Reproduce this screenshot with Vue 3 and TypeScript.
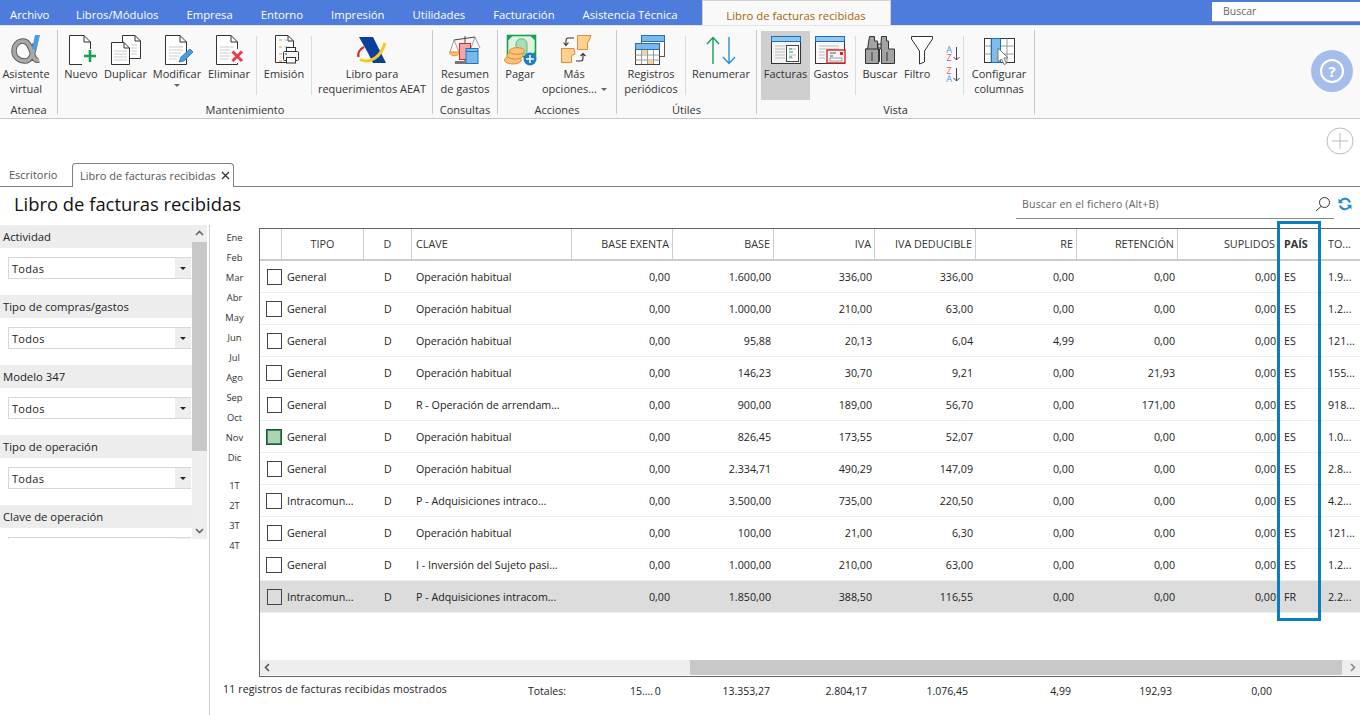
<script setup lang="ts">
interface Row {
  tipo: string
  clave: string
  nums: string[]
  pais: string
  total: string
  mark?: boolean
  sel?: boolean
}

const navItems: string[] = ['Libros/Módulos', 'Empresa', 'Entorno', 'Impresión', 'Utilidades', 'Facturación', 'Asistencia Técnica']
const filters: { title: string; value: string }[] = [
  { title: 'Actividad', value: 'Todas' },
  { title: 'Tipo de compras/gastos', value: 'Todos' },
  { title: 'Modelo 347', value: 'Todos' },
  { title: 'Tipo de operación', value: 'Todas' },
  { title: 'Clave de operación', value: '' }
]
const months: string[] = ['Ene', 'Feb', 'Mar', 'Abr', 'May', 'Jun', 'Jul', 'Ago', 'Sep', 'Oct', 'Nov', 'Dic']
const quarters: string[] = ['1T', '2T', '3T', '4T']
const numHeads: string[] = ['BASE EXENTA', 'BASE', 'IVA', 'IVA DEDUCIBLE', 'RE', 'RETENCIÓN', 'SUPLIDOS']
const OH = 'Operación habitual'
const rows: Row[] = [
  { tipo: 'General', clave: OH, nums: ['0,00', '1.600,00', '336,00', '336,00', '0,00', '0,00', '0,00'], pais: 'ES', total: '1.9...' },
  { tipo: 'General', clave: OH, nums: ['0,00', '1.000,00', '210,00', '63,00', '0,00', '0,00', '0,00'], pais: 'ES', total: '1.2...' },
  { tipo: 'General', clave: OH, nums: ['0,00', '95,88', '20,13', '6,04', '4,99', '0,00', '0,00'], pais: 'ES', total: '121...' },
  { tipo: 'General', clave: OH, nums: ['0,00', '146,23', '30,70', '9,21', '0,00', '21,93', '0,00'], pais: 'ES', total: '155...' },
  { tipo: 'General', clave: 'R - Operación de arrendam...', nums: ['0,00', '900,00', '189,00', '56,70', '0,00', '171,00', '0,00'], pais: 'ES', total: '918...' },
  { tipo: 'General', clave: OH, nums: ['0,00', '826,45', '173,55', '52,07', '0,00', '0,00', '0,00'], pais: 'ES', total: '1.0...', mark: true },
  { tipo: 'General', clave: OH, nums: ['0,00', '2.334,71', '490,29', '147,09', '0,00', '0,00', '0,00'], pais: 'ES', total: '2.8...' },
  { tipo: 'Intracomun...', clave: 'P - Adquisiciones intraco...', nums: ['0,00', '3.500,00', '735,00', '220,50', '0,00', '0,00', '0,00'], pais: 'ES', total: '4.2...' },
  { tipo: 'General', clave: OH, nums: ['0,00', '100,00', '21,00', '6,30', '0,00', '0,00', '0,00'], pais: 'ES', total: '121...' },
  { tipo: 'General', clave: 'I - Inversión del Sujeto pasi...', nums: ['0,00', '1.000,00', '210,00', '63,00', '0,00', '0,00', '0,00'], pais: 'ES', total: '1.2...' },
  { tipo: 'Intracomun...', clave: 'P - Adquisiciones intracom...', nums: ['0,00', '1.850,00', '388,50', '116,55', '0,00', '0,00', '0,00'], pais: 'FR', total: '2.2...', sel: true }
]
const totals: string[] = ['13.353,27', '2.804,17', '1.076,45', '4,99', '192,93', '0,00']
</script>

<template>
  <div class="page">
    <header class="topbar">
      <span class="archivo">Archivo</span>
      <span v-for="n in navItems" :key="n" class="nav">{{ n }}</span>
      <span class="ctx">Libro de facturas recibidas</span>
      <span class="topsearch">Buscar</span>
    </header>

    <section class="ribbon">
      <div class="group g-atenea">
        <div class="btns">
          <div class="btn w52">
            <svg class="ic" viewBox="0 0 36 32">
              <path d="M27 10C25 18 24 27 17 27C10 27 6 22 6 17C6 11 10 7 15 7C21 7 23 15 25 21C26 25 28 27 31 26" fill="none" stroke="#5f5f5f" stroke-width="5.5" />
              <path d="M27 10C25 18 24 27 17 27C10 27 6 22 6 17C6 11 10 7 15 7C21 7 23 15 25 21C26 25 28 27 31 26" fill="none" stroke="#a9a9a9" stroke-width="3.5" />
              <path d="M27 1H32L28 17L24 15Z" fill="#4a9fdf" />
            </svg>
            <span>Asistente<br />virtual</span>
          </div>
        </div>
        <div class="glabel">Atenea</div>
      </div>

      <div class="group g-mant">
        <div class="btns">
          <div class="btn w46">
            <svg class="ic" viewBox="0 0 36 32">
              <path d="M6.5 1.5H21L27.5 8V30.5H6.5Z" fill="#fff" stroke="#333" />
              <path d="M21 1.5V8H27.5" fill="none" stroke="#333" />
              <rect x="19" y="15" width="16" height="16" fill="#f9f9f9" />
              <path d="M21 22H33M27 16V28" stroke="#12a150" stroke-width="2.6" />
            </svg>
            <span>Nuevo</span>
          </div>
          <div class="btn w42">
            <svg class="ic" viewBox="0 0 36 32">
              <path d="M15.5 1.5H28L33.5 7V24.5H15.5Z" fill="#fff" stroke="#333" />
              <path d="M28 1.5V7H33.5" fill="none" stroke="#333" />
              <path d="M24 11H30M24 14H30M24 17H30M24 20H30" stroke="#ccc" />
              <path d="M4.5 8.5H17L22.5 14V30.5H4.5Z" fill="#fff" stroke="#333" />
              <path d="M17 8.5V14H22.5" fill="none" stroke="#333" />
              <path d="M7 17H20M7 20H20M7 23H20M7 26H20" stroke="#ccc" />
            </svg>
            <span>Duplicar</span>
          </div>
          <div class="btn w62">
            <svg class="ic" viewBox="0 0 36 32">
              <path d="M6.5 1.5H21L27.5 8V30.5H6.5Z" fill="#fff" stroke="#333" />
              <path d="M21 1.5V8H27.5" fill="none" stroke="#333" />
              <path d="M10 13H24M10 16H24M10 19H22M10 22H20M10 25H18" stroke="#ccc" />
              <path d="M20 28L22 23L31 15L34 18L25 27Z" fill="#4a9bdc" stroke="#1f74b8" stroke-width=".8" />
            </svg>
            <span>Modificar</span>
            <i class="caret cm"></i>
          </div>
          <div class="btn w42">
            <svg class="ic" viewBox="0 0 36 32">
              <path d="M5.5 1.5H20L26.5 8V30.5H5.5Z" fill="#fff" stroke="#333" />
              <path d="M20 1.5V8H26.5" fill="none" stroke="#333" />
              <path d="M9 13H23M9 16H23M9 19H20M9 22H19M9 25H18" stroke="#ccc" />
              <rect x="19" y="15" width="14" height="14" fill="#f9f9f9" />
              <path d="M21.5 17.5L31 27M31 17.5L21.5 27" stroke="#e53e49" stroke-width="3" />
            </svg>
            <span>Eliminar</span>
          </div>
          <i class="sep s6"></i>
          <div class="btn w54">
            <svg class="ic" viewBox="0 0 36 32">
              <path d="M9.5 1.5H22L27.5 7V28.5H9.5Z" fill="#fff" stroke="#333" />
              <path d="M22 1.5V7H27.5" fill="none" stroke="#333" />
              <path d="M13 6H16M13 13H16M13 20H16M13 27H16" stroke="#f0922b" />
              <path d="M18 6H21M18 13H24M18 20H19" stroke="#bbb" />
              <path d="M21 7.5" />
              <rect x="17.5" y="17.5" width="15" height="9" rx="1" fill="#f4f4f4" stroke="#333" />
              <rect x="20.5" y="13.5" width="9" height="4" fill="#fff" stroke="#333" />
              <rect x="20.5" y="23.5" width="9" height="5.5" fill="#fff" stroke="#333" />
              <path d="M19 20H21" stroke="#2f8fd6" stroke-width="1.4" />
            </svg>
            <span>Emisión</span>
          </div>
          <i class="sep"></i>
          <div class="btn w120">
            <svg class="ic" viewBox="0 0 36 32">
              <path d="M5 3H19L32 29H19L14 19Z" fill="#0a3f9c" />
              <path d="M6 25.5C16 30 27 23 31 9" fill="none" stroke="#f3cb1f" stroke-width="3" />
              <path d="M4.5 23C3.5 19 6 15 10 13" fill="none" stroke="#d92b2b" stroke-width="2.4" />
            </svg>
            <span>Libro para<br />requerimientos AEAT</span>
          </div>
        </div>
        <div class="glabel">Mantenimiento</div>
      </div>

      <div class="group g-cons">
        <div class="btns">
          <div class="btn w64">
            <svg class="ic" viewBox="0 0 36 32">
              <path d="M18 2V27M7 6L28 3" stroke="#444" fill="none" />
              <path d="M7 6L3 18M7 6L12 18M28 3L24 14M28 3L33 14" stroke="#777" stroke-width=".7" fill="none" />
              <path d="M2.5 18H12.5C12 23 3 23 2.5 18Z" fill="#f7c27b" stroke="#ea8a2e" />
              <rect x="12.5" y="9.5" width="11" height="16" fill="#f6a6a6" stroke="#d8232a" />
              <rect x="19" y="14.5" width="12" height="15" fill="#7ab8ea" stroke="#1f74b8" />
              <path d="M19 17.5H31" stroke="#1f74b8" />
              <rect x="8" y="27" width="11" height="3" fill="#777" />
            </svg>
            <span>Resumen<br />de gastos</span>
          </div>
        </div>
        <div class="glabel">Consultas</div>
      </div>

      <div class="group g-acc">
        <div class="btns">
          <div class="btn w44">
            <svg class="ic" viewBox="0 0 36 32">
              <rect x="5.5" y="1.5" width="28" height="21" fill="#dff3e4" stroke="#16a34a" stroke-width="1.6" />
              <path d="M5.5 1.5H11L5.5 7ZM33.5 1.5H28L33.5 7ZM33.5 22.5H28L33.5 17Z" fill="#16a34a" />
              <path d="M14 20V10C14 3 25 3 25 10V20Z" fill="#a9dcb7" stroke="#5fb77a" />
              <ellipse cx="11" cy="26" rx="8.5" ry="4" fill="#f7c27b" stroke="#ea8a2e" />
              <ellipse cx="13" cy="21.5" rx="8" ry="3.6" fill="#f7c27b" stroke="#ea8a2e" />
              <ellipse cx="15" cy="17" rx="7.5" ry="3.4" fill="#f7c27b" stroke="#ea8a2e" />
              <circle cx="28" cy="25" r="6.5" fill="#1f7fc4" />
              <path d="M24 25H32M28 21V29" stroke="#fff" stroke-width="1.5" />
            </svg>
            <span>Pagar</span>
          </div>
          <div class="btn w64">
            <svg class="ic" viewBox="0 0 36 32">
              <path d="M5.5 14.5H18L19 20L15.5 21.5V28.5H5.5Z" fill="#fbd28f" stroke="#ea8a2e" />
              <path d="M21.5 1.5H35L33 7L31.5 9V15.5H21.5Z" fill="#fbd28f" stroke="#ea8a2e" />
              <path d="M18 4H12C10.5 4 10 5 10 7V11M7.5 8.5L10 11.5L12.5 8.5" fill="none" stroke="#333" stroke-width="1.1" />
              <path d="M20 27H25C26.5 27 27 26 27 24V20M24.5 22L27 19.5L29.5 22" fill="none" stroke="#333" stroke-width="1.1" />
            </svg>
            <span>Más<br />opciones...<i class="caret cinl"></i></span>
          </div>
        </div>
        <div class="glabel">Acciones</div>
      </div>

      <div class="group g-util">
        <div class="btns">
          <div class="btn w68">
            <svg class="ic" viewBox="0 0 36 32">
              <rect x="8.5" y="1.5" width="23" height="21" fill="#fff" stroke="#555" />
              <rect x="8.5" y="1.5" width="23" height="6" fill="#7ab8ea" stroke="#1f74b8" />
              <rect x="2.5" y="9.5" width="24" height="21" fill="#fff" stroke="#444" />
              <path d="M2.5 21H26.5M2.5 26H26.5M8.5 15V30M14.5 15V30M20.5 15V30" stroke="#999" />
              <rect x="2.5" y="9.5" width="24" height="6" fill="#7ab8ea" stroke="#1f74b8" />
              <rect x="9" y="16" width="5" height="5" fill="#f9d38f" />
              <rect x="15" y="26" width="5" height="4" fill="#f9d38f" />
            </svg>
            <span>Registros<br />periódicos</span>
          </div>
          <i class="sep"></i>
          <div class="btn w70">
            <svg class="ic" viewBox="0 0 36 32">
              <path d="M10 30V4M4 10L10 3.5L16 10" fill="none" stroke="#14a05a" stroke-width="1.4" />
              <path d="M26 3V29M20 23L26 29.5L32 23" fill="none" stroke="#2f8fd6" stroke-width="1.4" />
            </svg>
            <span>Renumerar</span>
          </div>
        </div>
        <div class="glabel">Útiles</div>
      </div>

      <div class="group g-vista">
        <div class="btns">
          <div class="btn w49 active">
            <svg class="ic" viewBox="0 0 36 32">
              <rect x="3.5" y="2.5" width="29" height="27" fill="#f4f4f4" stroke="#333" />
              <rect x="3.5" y="2.5" width="29" height="5" fill="#95c7ee" stroke="#1672b8" />
              <path d="M7 12H17M7 15H17M7 18H17M7 21H17M7 24H17" stroke="#bbb" />
              <rect x="18.5" y="11.5" width="12" height="16" fill="#fff" stroke="#444" />
              <path d="M21 15H28M21 21H28M21 24H25" stroke="#bbb" />
              <path d="M21 18H25" stroke="#14a05a" />
              <path d="M21 15H24M21 23H24" stroke="#14a05a" />
            </svg>
            <span>Facturas</span>
          </div>
          <div class="btn w42">
            <svg class="ic" viewBox="0 0 36 32">
              <rect x="2.5" y="2.5" width="29" height="27" fill="#f9f9f9" stroke="#333" />
              <rect x="2.5" y="2.5" width="29" height="5" fill="#95c7ee" stroke="#1672b8" />
              <path d="M6 12H26M6 15H26M6 18H12M6 21H12M6 24H12" stroke="#bbb" />
              <rect x="14" y="16" width="18" height="13" fill="#f7f7f7" stroke="#d8232a" stroke-width="1.4" />
              <path d="M17 19H23M17 22H20" stroke="#555" />
              <rect x="27" y="18" width="3" height="3" fill="#d8232a" />
              <rect x="17" y="24" width="12" height="3" fill="#fff" stroke="#777" stroke-width=".7" />
            </svg>
            <span>Gastos</span>
          </div>
          <i class="sep s3"></i>
          <div class="btn w48">
            <svg class="ic" viewBox="0 0 36 32">
              <path d="M6.5 2.5H11.5V7H14.5V15H16.5V27.5H2.5V15H4.5Z" fill="#a3a3a3" stroke="#333" transform="translate(1)" />
              <path d="M19.5 2.5H24.5V7H26.5V15H32.5V29.5H19.5V15H18.5Z" fill="#a3a3a3" stroke="#333" />
              <path d="M3.5 15H16.5V29.5H3.5Z" fill="#a3a3a3" stroke="#333" />
              <path d="M16 10H19V14H16Z" fill="#ddd" stroke="#333" />
              <path d="M10 18V27M25 18V27" stroke="#333" />
            </svg>
            <span>Buscar</span>
          </div>
          <div class="btn w26">
            <svg class="ic" viewBox="0 0 36 32">
              <path d="M7.5 2.5H28.5V5L20.5 17V28L15.5 30V17L7.5 5Z" fill="#fff" stroke="#333" />
            </svg>
            <span>Filtro</span>
          </div>
          <div class="az">
            <div class="azi"><span class="l"><b class="bl">A</b><b class="rd">Z</b></span><svg viewBox="0 0 7 14" class="ar"><path d="M3.5 0V13M.5 10L3.5 13L6.5 10" fill="none" stroke="#444" /></svg></div>
            <div class="azi"><span class="l"><b class="rd">Z</b><b class="bl">A</b></span><svg viewBox="0 0 7 14" class="ar"><path d="M3.5 0V13M.5 10L3.5 13L6.5 10" fill="none" stroke="#444" /></svg></div>
          </div>
          <i class="sep"></i>
          <div class="btn w70">
            <svg class="ic" viewBox="0 0 36 32">
              <rect x="3.5" y="4.5" width="30" height="24" fill="#fff" stroke="#333" />
              <path d="M3.5 12H33.5M3.5 20H33.5M10 4.5V28.5M19 4.5V28.5M26 4.5V28.5" stroke="#999" />
              <rect x="10.5" y="4.5" width="9" height="24" fill="#7fbcea" stroke="#1672b8" />
              <path d="M17 14V28L20.5 25L23 30.5L25.5 29.5L23 24L27 24Z" fill="#fff" stroke="#777" />
            </svg>
            <span>Configurar<br />columnas</span>
          </div>
        </div>
        <div class="glabel">Vista</div>
      </div>

      <div class="help" aria-label="Ayuda"><span>?</span></div>
    </section>

    <div class="addrow">
      <svg class="add" viewBox="0 0 28 28">
        <circle cx="14" cy="14" r="13" fill="#fff" stroke="#bcbcbc" />
        <path d="M14 6V22M6 14H22" stroke="#bcbcbc" />
      </svg>
    </div>

    <nav class="tabs">
      <span class="t-plain">Escritorio</span>
      <span class="t-active">Libro de facturas recibidas
        <svg class="x" viewBox="0 0 9 9"><path d="M1 1L8 8M8 1L1 8" stroke="#333" stroke-width="1.3" /></svg>
      </span>
    </nav>

    <div class="titlebar">
      <h1>Libro de facturas recibidas</h1>
      <div class="filesearch">
        <span>Buscar en el fichero (Alt+B)</span>
        <svg class="lens" viewBox="0 0 16 16"><circle cx="9.5" cy="6.5" r="5" fill="none" stroke="#333" /><path d="M6 10.5L1 15" stroke="#333" /></svg>
      </div>
      <svg class="refresh" viewBox="0 0 14 14">
        <path d="M12 5.5A5.2 5.2 0 0 0 2.6 4.2" fill="none" stroke="#1f8ad0" stroke-width="2" />
        <path d="M2 8.5A5.2 5.2 0 0 0 11.4 9.8" fill="none" stroke="#1f8ad0" stroke-width="2" />
        <path d="M.5 1.5V6.2H5.2ZM13.5 12.5V7.8H8.8Z" fill="#1f8ad0" />
      </svg>
    </div>

    <main class="main">
      <aside class="filters">
        <div class="fl-list">
          <div v-for="f in filters" :key="f.title" class="fl">
            <div class="fl-head">{{ f.title }}</div>
            <div class="fl-sel">
              <span>{{ f.value }}</span>
              <i class="fl-arrow"></i>
            </div>
          </div>
        </div>
        <div class="vscroll">
          <svg class="chev" viewBox="0 0 9 6"><path d="M1 5L4.5 1.5L8 5" fill="none" stroke="#666" stroke-width="1.6" /></svg>
          <div class="vthumb"></div>
          <svg class="chev chev-d" viewBox="0 0 9 6"><path d="M1 1L4.5 4.5L8 1" fill="none" stroke="#666" stroke-width="1.6" /></svg>
        </div>
      </aside>

      <div class="months">
        <span v-for="m in months" :key="m">{{ m }}</span>
        <span v-for="q in quarters" :key="q" class="q" :class="{ first: q === '1T' }">{{ q }}</span>
      </div>

      <div class="content">
        <div class="grid">
          <div class="head cols">
            <div></div>
            <div class="c">TIPO</div>
            <div class="c">D</div>
            <div class="l">CLAVE</div>
            <div v-for="h in numHeads" :key="h" class="r">{{ h }}</div>
            <div class="l pais"><b>PAÍS</b></div>
            <div class="l tot">TO...</div>
          </div>
          <div class="body">
            <div v-for="(r, i) in rows" :key="i" class="row cols" :class="{ sel: r.sel }">
              <div class="chk" :class="{ odd: i % 2 === 1 }"><i class="box" :class="{ mark: r.mark }"></i></div>
              <div class="l tipo">{{ r.tipo }}</div>
              <div class="c">D</div>
              <div class="l">{{ r.clave }}</div>
              <div v-for="(n, j) in r.nums" :key="j" class="r">{{ n }}</div>
              <div class="l pais">{{ r.pais }}</div>
              <div class="l tot">{{ r.total }}</div>
            </div>
          </div>
          <div class="hscroll">
            <svg class="hchev" viewBox="0 0 6 9"><path d="M5 1L1.5 4.5L5 8" fill="none" stroke="#555" stroke-width="1.6" /></svg>
            <div class="hthumb"></div>
            <svg class="hchev" viewBox="0 0 6 9"><path d="M1 1L4.5 4.5L1 8" fill="none" stroke="#888" stroke-width="1.6" /></svg>
          </div>
        </div>
        <footer class="foot">
          <span class="count">11 registros de facturas recibidas mostrados</span>
          <span class="tl">Totales:</span>
          <span class="t0">15.... <i>0</i></span>
          <span v-for="t in totals" :key="t" class="tv">{{ t }}</span>
        </footer>
      </div>
    </main>

    <div class="hl"></div>
  </div>
</template>

<style>
html, body { margin: 0; overflow: hidden; background: #fff; }
</style>

<style scoped>
.page { position: relative; width: 1360px; height: 715px; overflow: hidden; background: #fff; color: #222; font-family: "Open Sans", "Noto Sans", sans-serif; font-size: 11px; }

.topbar { display: flex; height: 25px; background: #4e7cdc; color: #fff; align-items: center; font-size: 11.3px; }
.archivo { width: 62px; padding-left: 10px; box-sizing: border-box; padding-top: 3px; }
.nav { padding: 3px 14px 0; white-space: nowrap; margin-right: 0; }
.nav:first-of-type { margin-left: 1px; }
.ctx { width: 189px; box-sizing: border-box; height: 25px; margin-left: 10px; padding-top: 7px; background: #f9f9f9; border: 1px solid #d4d0c8; border-bottom: 0; color: #a5640a; text-align: center; }
.topsearch { margin-left: auto; width: 148px; height: 20px; margin-top: -2px; box-sizing: border-box; padding: 2px 11px; background: #fff; border-bottom: 1px solid #999; color: #666; font-size: 10.5px; }

.ribbon { position: relative; display: flex; height: 94px; box-sizing: border-box; padding-top: 4px; background: #f9f9f9; border-top: 1px solid #e4e4e4; border-bottom: 1px solid #c8c8c8; }
.group { box-sizing: border-box; height: 84px; border-right: 1px solid #c8c8c8; flex: none; }
.g-atenea { width: 58px; }
.g-mant { width: 375px; }
.g-cons { width: 65px; }
.g-acc { width: 119px; }
.g-util { width: 140px; }
.g-vista { width: 278px; padding-left: 4px; }
.btns { display: flex; height: 69px; margin-top: 1px; }
.btn { flex: none; position: relative; box-sizing: border-box; padding-top: 3px; text-align: center; white-space: nowrap; line-height: 15px; color: #333; letter-spacing: 0; }
.btn.active { background: #cfcfcf; }
.ic { display: block; width: 36px; height: 32px; margin: 0 auto; }
.w26 { width: 26px; } .w42 { width: 42px; } .w44 { width: 44px; } .w46 { width: 46px; } .w48 { width: 48px; } .w49 { width: 49px; } .w52 { width: 52px; } .w54 { width: 54px; } .w62 { width: 62px; } .w64 { width: 64px; } .w68 { width: 68px; } .w70 { width: 70px; } .w120 { width: 120px; }
.sep { flex: none; width: 1px; height: 59px; margin-top: 5px; background: #dcdcdc; }
.s6 { margin-left: 6px; }
.s3 { margin-left: 3px; }
.glabel { margin-left: 0; text-align: center; line-height: 20px; color: #333; }
.g-vista .glabel { margin-left: -4px; }
.caret { display: inline-block; width: 0; height: 0; border: 3px solid transparent; border-top: 3px solid #666; border-bottom: 0; }
.cm { position: absolute; left: 28px; top: 53px; }
.cinl { margin-left: 4px; vertical-align: 2px; }
.az { flex: none; width: 33px; display: flex; flex-direction: column; gap: 5px; padding: 15px 0 0 11px; box-sizing: border-box; }
.azi { display: flex; height: 16px; }
.l { display: block; }
.az .l { display: flex; flex-direction: column; width: 8px; font-size: 9px; line-height: 8px; text-align: center; }
.az b { font-weight: 400; }
.bl { color: #4a9fdf; }
.rd { color: #e5555d; }
.ar { width: 7px; height: 14px; margin-left: 0; margin-top: 1px; }
.help { position: absolute; left: 1311px; top: 24px; width: 42px; height: 42px; border-radius: 50%; background: #a6bdec; display: flex; align-items: center; justify-content: center; }
.help span { width: 20px; height: 20px; border: 2.5px solid #fff; border-radius: 50%; color: #fff; font-weight: 700; font-size: 15px; line-height: 20px; text-align: center; }

.addrow { display: flex; justify-content: flex-end; height: 44px; padding: 8px 6px 0 0; box-sizing: border-box; }
.add { width: 28px; height: 28px; }

.tabs { display: flex; height: 24px; box-sizing: border-box; border-bottom: 1px solid #808080; color: #555; }
.t-plain { width: 72px; padding: 4px 0 0 9px; box-sizing: border-box; }
.t-active { width: 162px; height: 24px; box-sizing: border-box; display: flex; align-items: center; gap: 5px; padding: 0 0 1px 7px; background: #fff; border: 1px solid #808080; border-bottom: 0; border-radius: 4px 4px 0 0; white-space: nowrap; }
.x { width: 9px; height: 9px; }

.titlebar { display: flex; height: 38px; }
h1 { margin: 0; padding: 4px 0 0 14px; font-weight: 400; font-size: 18.4px; line-height: 26px; color: #111; flex: 1; }
.filesearch { position: relative; width: 318px; height: 25px; margin-top: 7px; box-sizing: border-box; border-bottom: 1px solid #888; padding: 2px 0 0 6px; color: #666; line-height: 16px; font-size: 10.6px; letter-spacing: .15px; }
.lens { position: absolute; right: 3px; top: 2px; width: 16px; height: 16px; }
.refresh { width: 14px; height: 14px; margin: 10px 8px 0 4px; }

.main { display: flex; height: 490px; }
.filters { flex: none; width: 207px; height: 314px; display: flex; }
.fl-list { width: 192px; height: 314px; overflow: hidden; }
.fl { height: 70px; }
.fl-head { height: 23px; line-height: 23px; padding-left: 3px; background: #ededed; font-size: 11.3px; }
.fl-sel { display: flex; justify-content: space-between; align-items: center; height: 20px; margin: 9px 1px 0 8px; box-sizing: content-box; border: 1px solid #d8d8d8; border-right: 0; padding-left: 3px; letter-spacing: .3px; }
.fl-arrow { display: flex; align-items: center; justify-content: center; width: 16px; height: 20px; background: #eee; position: relative; }
.fl-arrow::after { content: ""; width: 0; height: 0; border: 3px solid transparent; border-top: 3px solid #222; border-bottom: 0; }
.vscroll { width: 15px; height: 314px; background: #eee; display: flex; flex-direction: column; align-items: center; }
.chev { width: 9px; height: 6px; margin: 5px 0 6px; flex: none; }
.chev-d { margin: auto 0 5px; }
.vthumb { width: 15px; height: 209px; background: #c8c8c8; flex: none; }
.months { flex: none; width: 50px; margin-left: 2px; border-left: 1px solid #ccc; box-sizing: border-box; display: flex; flex-direction: column; align-items: center; padding: 3px 0 0 0; color: #333; font-size: 9.4px; line-height: 20px; }
.months span { height: 20px; }
.q.first { margin-top: 8px; }
.content { flex: none; width: 1101px; padding-top: 3px; box-sizing: border-box; }
.grid { height: 449px; box-sizing: border-box; border: 1px solid #666; border-right: 0; display: flex; flex-direction: column; }
.cols { display: grid; grid-template-columns: 22px 82px 48px 160px repeat(7, 101px) 41px 35px 1fr; align-items: center; }
.head { height: 32px; flex: none; box-sizing: border-box; border-bottom: 2px solid #ccc; color: #333; font-size: 10.8px; }
.head > div { height: 30px; line-height: 30px; box-sizing: border-box; border-right: 1px solid #ccc; }
.head > .tot { border-right: 0; }
.c { text-align: center; }
.r { text-align: right; padding-right: 3px; }
.l { text-align: left; padding-left: 4px; white-space: nowrap; overflow: hidden; }
.head .pais { padding-left: 5px; }
.tot { padding-left: 8px; }
.body { flex: 1; overflow: hidden; }
.row { height: 32px; box-sizing: border-box; border-bottom: 1px solid #eee; font-size: 10.7px; }
.row.sel { background: #dcdcdc; }
.row .pais { padding-left: 5px; }
.row .tipo { padding-left: 5px; }
.chk { padding-left: 7px; height: 16px; display: flex; }
.chk.odd { padding-left: 6px; }
.box { display: block; width: 16px; height: 16px; box-sizing: border-box; border: 1px solid #444; background: transparent; }
.box.mark { background: #a9d5b5; outline: 1px solid #1a9a55; outline-offset: -2px; }
.hscroll { flex: none; display: flex; align-items: center; justify-content: space-between; height: 15px; margin-bottom: 1px; background: #eee; position: relative; }
.hchev { width: 6px; height: 9px; margin: 0 4px; }
.hthumb { position: absolute; left: 430px; right: 18px; top: 0; bottom: 0; background: #c8c8c8; }
.foot { position: relative; height: 38px; font-size: 10.5px; }
.foot span { position: absolute; top: 7px; white-space: nowrap; }
.count { left: -36px; letter-spacing: .15px; top: 5px !important; }
.tl { left: 269px; }
.t0 { left: 371px; }
.t0 i { font-style: normal; margin-left: -1px; }
.tv { transform: translateX(-100%); }
.tv:nth-of-type(4) { left: 511px; }
.tv:nth-of-type(5) { left: 608px; }
.tv:nth-of-type(6) { left: 709px; }
.tv:nth-of-type(7) { left: 812px; }
.tv:nth-of-type(8) { left: 913px; }
.tv:nth-of-type(9) { left: 1013px; }
.hl { position: absolute; left: 1277px; top: 221px; width: 44px; height: 400px; box-sizing: border-box; border: 3px solid #0a7cc1; pointer-events: none; }
</style>
